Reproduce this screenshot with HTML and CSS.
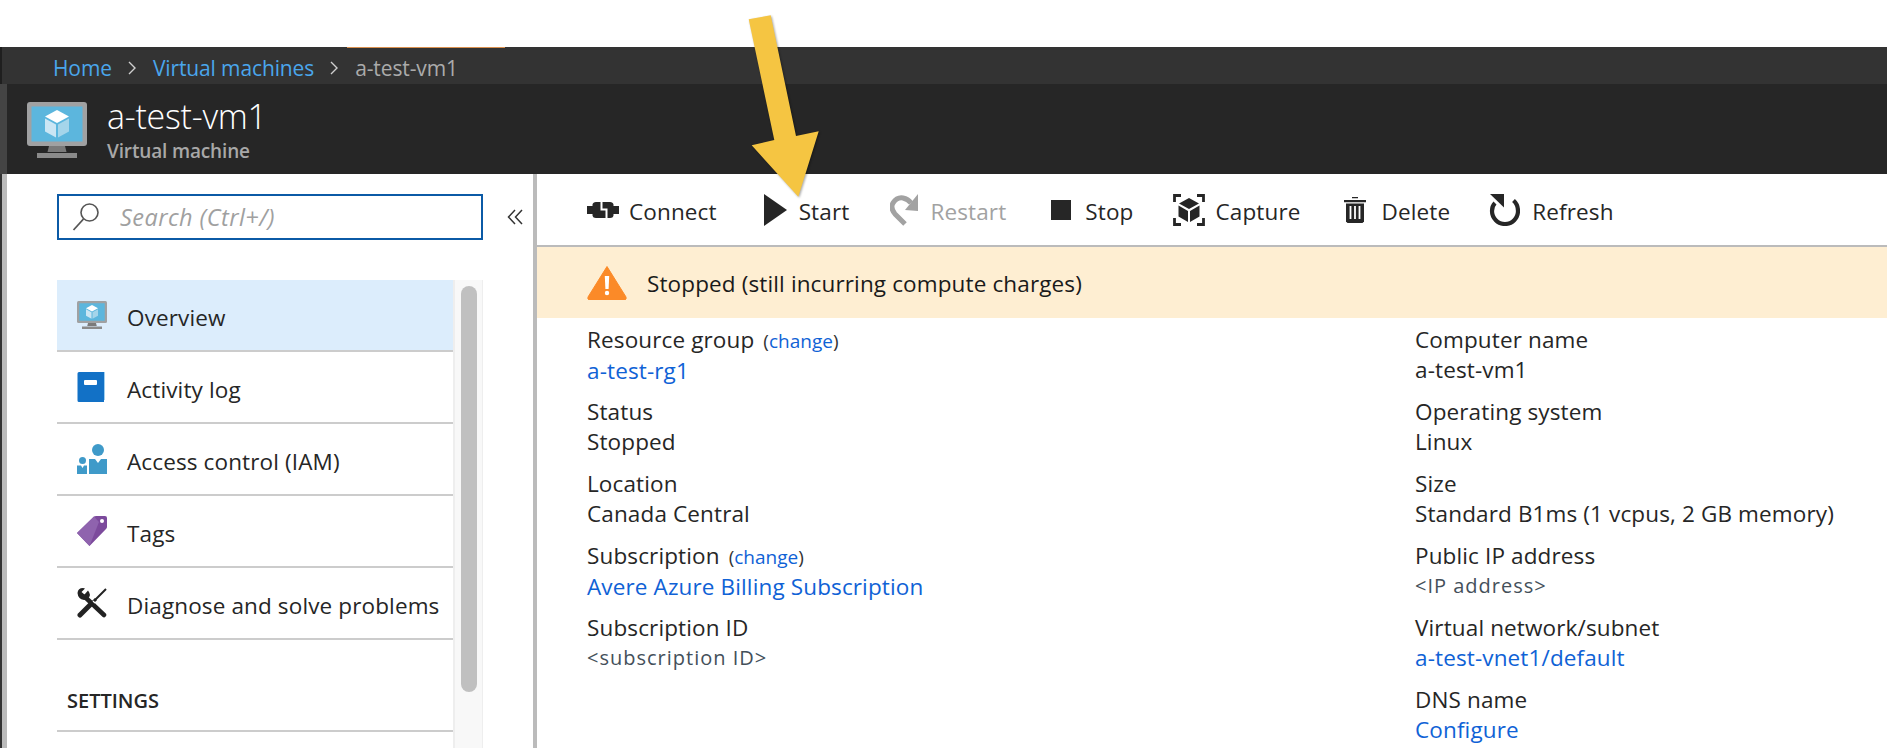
FILE: index.html
```html
<!DOCTYPE html>
<html lang="en">
<head>
<meta charset="utf-8">
<title>a-test-vm1 - Virtual machine</title>
<link rel="stylesheet" href="styles.css">
</head>
<body>
<div class="page">
  <div class="topgap"></div>
  <nav class="crumbs">
    <span class="crumb-accent"></span>
    <a class="crumb-link">Home</a>
    <svg class="crumb-sep" viewBox="0 0 10 16"><path d="M2 2l6 6-6 6" fill="none" stroke="#cfcfcf" stroke-width="1.4"/></svg>
    <a class="crumb-link">Virtual machines</a>
    <svg class="crumb-sep" viewBox="0 0 10 16"><path d="M2 2l6 6-6 6" fill="none" stroke="#cfcfcf" stroke-width="1.4"/></svg>
    <span class="crumb-current">a-test-vm1</span>
  </nav>
  <header class="title-bar">
    <svg class="vm-logo" viewBox="0 0 60 56">
      <rect x="0" y="0" width="60" height="44" rx="3" fill="#a0a1a2"/>
      <rect x="4.5" y="4.500" width="51" height="35" fill="#5cb6dd"/>
      <path d="M22 44h16l1.500 6h-19z" fill="#7a7a7a"/>
      <rect x="10" y="51" width="40" height="5" fill="#8a8a8a"/>
      <path d="M30 8l12 6.500-12 6.500-12-6.500z" fill="#fff"/>
      <path d="M18 16.500l11 6v13l-11-6z" fill="#cbe6f4"/>
      <path d="M42 16.500l-11 6v13l11-6z" fill="#a5d5ea"/>
    </svg>
    <div class="title-text">
      <h1 class="title">a-test-vm1</h1>
      <div class="subtitle">Virtual machine</div>
    </div>
  </header>
  <main class="body">
    <aside class="sidebar">
      <div class="search-row">
        <div class="search">
          <svg class="search-icon" viewBox="0 0 28 30"><circle cx="17.500" cy="10.500" r="8.500" fill="none" stroke="#555" stroke-width="1.600"/><path d="M11.500 17L1.500 28" fill="none" stroke="#555" stroke-width="1.800"/></svg>
          <span class="search-text">Search (Ctrl+/)</span>
        </div>
        <svg class="collapse" viewBox="0 0 16 16"><path d="M8 1L1.500 8 8 15M15 1L8.500 8 15 15" fill="none" stroke="#333" stroke-width="1.500"/></svg>
      </div>
      <div class="nav-wrap">
        <ul class="nav">
          <li class="nav-item is-active">
            <svg class="nav-icon" viewBox="0 0 60 56">
              <rect x="0" y="0" width="60" height="44" rx="3" fill="#a0a1a2"/>
              <rect x="4.500" y="4.500" width="51" height="35" fill="#5cb6dd"/>
              <path d="M22 44h16l1.500 6h-19z" fill="#7a7a7a"/>
              <rect x="10" y="51" width="40" height="5" fill="#8a8a8a"/>
              <path d="M30 8l12 6.500-12 6.500-12-6.500z" fill="#fff"/>
              <path d="M18 16.500l11 6v13l-11-6z" fill="#cbe6f4"/>
              <path d="M42 16.500l-11 6v13l11-6z" fill="#a5d5ea"/>
            </svg>
            <span class="nav-label">Overview</span>
          </li>
          <li class="nav-item">
            <svg class="nav-icon" viewBox="0 0 30 30">
              <path d="M4 0h24v28H3z" fill="#9fd0f0"/>
              <path d="M2 0h25v30H2a1.500 1.500 0 0 1-1.500-1.500V1.500A1.500 1.500 0 0 1 2 0z" fill="#1271c6"/>
              <rect x="7" y="8" width="13" height="5" rx="1" fill="#fff"/>
            </svg>
            <span class="nav-label">Activity log</span>
          </li>
          <li class="nav-item">
            <svg class="nav-icon" viewBox="0 0 30 30">
              <circle cx="21" cy="6" r="6" fill="#3f9ac9"/>
              <path d="M12 15h6l3 4 3-4h6v15H12z" fill="#3f9ac9"/>
              <circle cx="5.500" cy="16.500" r="3.500" fill="#3f9ac9"/>
              <path d="M0 21.500h4l1.500 2.500L7 21.500h3V30H0z" fill="#3f9ac9"/>
            </svg>
            <span class="nav-label">Access control (IAM)</span>
          </li>
          <li class="nav-item">
            <svg class="nav-icon" viewBox="0 0 30 30">
              <path d="M0 17L17 .500Q18 0 19 0h9q2 0 2 2v9q0 1-1 2L12.500 30z" fill="#7c4a9c"/>
              <path d="M0 17L17 .500 22 6 12.500 30z" fill="#8f63ae"/>
              <circle cx="25" cy="5" r="2" fill="#fff"/>
            </svg>
            <span class="nav-label">Tags</span>
          </li>
          <li class="nav-item">
            <svg class="nav-icon" viewBox="0 0 30 30">
              <path d="M8 9L27 27" fill="none" stroke="#222" stroke-width="4.500" stroke-linecap="round"/>
              <path d="M6 0Q1 0 .500 5 1 11 7 12q5-.5 6-5-.5-3-2-4.500L7.500 6.500 4.500 4 8 .500z" fill="#222"/>
              <path d="M29 1L18 12" fill="none" stroke="#222" stroke-width="2"/>
              <path d="M19 11l-4 4" fill="none" stroke="#222" stroke-width="3"/>
              <path d="M14 16L3 27" fill="none" stroke="#222" stroke-width="5" stroke-linecap="round"/>
              <path d="M16 13l2 2" fill="none" stroke="#fff" stroke-width="1.200"/>
            </svg>
            <span class="nav-label">Diagnose and solve problems</span>
          </li>
          <li class="nav-heading">SETTINGS</li>
          <li class="nav-item"></li>
        </ul>
        <div class="scroll-track"><div class="scroll-thumb"></div></div>
      </div>
    </aside>
    <section class="content">
      <div class="toolbar">
        <button class="tool">
          <svg class="ic-connect" viewBox="0 0 32 16">
            <path d="M0 4h5.500V2.500Q6 0 9 0h14q3 0 3.500 2.500V4H32v8h-5.500v1.500Q26 16 23 16H9q-3 0-3.500-2.500V12H0z" fill="#262626"/>
            <path d="M14.500 0V7.500H19.500V16" fill="none" stroke="#fff" stroke-width="2"/>
          </svg>
          <span class="tool-label">Connect</span>
        </button>
        <button class="tool">
          <svg class="ic-start" viewBox="0 0 23 32"><path d="M0 0l23 16L0 32z" fill="#262626"/></svg>
          <span class="tool-label">Start</span>
        </button>
        <button class="tool is-disabled">
          <svg class="ic-restart" viewBox="0 0 28 32">
            <path d="M15 30L5 20Q0 14 3 9 7 3 13 4 18 5 21 9" fill="none" stroke="#a2a2a2" stroke-width="5"/>
            <path d="M28 0v17L15 16z" fill="#a2a2a2"/>
          </svg>
          <span class="tool-label">Restart</span>
        </button>
        <button class="tool">
          <span class="ic-stop"></span>
          <span class="tool-label">Stop</span>
        </button>
        <button class="tool">
          <svg class="ic-capture" viewBox="0 0 32 32">
            <path d="M8 1.500H1.500V8M24 1.500h6.500V8M1.500 24v6.500H8M30.500 24v6.500H24" fill="none" stroke="#262626" stroke-width="2.800"/>
            <path d="M16 4l10 5.500L16 15 6 9.500z" fill="#262626"/>
            <path d="M5.500 11.500l9.500 5.500v11l-9.500-5.500zM26.500 11.500L17 17v11l9.500-5.500z" fill="#262626"/>
          </svg>
          <span class="tool-label">Capture</span>
        </button>
        <button class="tool">
          <svg class="ic-delete" viewBox="0 0 22 26">
            <path d="M8 0h6v1.200H8zM0 3h22v2.200H0z" fill="#262626"/>
            <path d="M2 6.500h18V24.500L18.500 26h-15L2 24.500z" fill="#262626"/>
            <path d="M6.500 9v13M11 9v13M15.500 9v13" stroke="#fff" stroke-width="1.800"/>
          </svg>
          <span class="tool-label">Delete</span>
        </button>
        <button class="tool">
          <svg class="ic-refresh" viewBox="0 0 31 32">
            <path d="M24.500 6.500Q29 10.500 29 17a13 13 0 0 1-26 0Q3 12 6 9" fill="none" stroke="#262626" stroke-width="4.200"/>
            <path d="M1 0h14v13.500z" fill="#262626"/>
          </svg>
          <span class="tool-label">Refresh</span>
        </button>
      </div>
      <div class="banner">
        <svg class="warn" viewBox="0 0 40 35">
          <path d="M20 1.500L39 32q.8 2.500-1.500 3h-35Q.2 34.500 1 32z" fill="#fb8a28" stroke="#fb8a28" stroke-linejoin="round"/>
          <path d="M17.800 11h4.400l-.6 13h-3.200z" fill="#fff"/>
          <circle cx="20" cy="28" r="2.200" fill="#fff"/>
        </svg>
        <span class="banner-text">Stopped (still incurring compute charges)</span>
      </div>
      <div class="details">
        <div class="col">
          <div class="field"><div class="label">Resource group <span class="change">(<a class="link">change</a>)</span></div><a class="link">a-test-rg1</a></div>
          <div class="field"><div class="label">Status</div><div>Stopped</div></div>
          <div class="field"><div class="label">Location</div><div>Canada Central</div></div>
          <div class="field"><div class="label">Subscription <span class="change">(<a class="link">change</a>)</span></div><a class="link">Avere Azure Billing Subscription</a></div>
          <div class="field"><div class="label">Subscription ID</div><div class="placeholder">&lt;subscription ID&gt;</div></div>
        </div>
        <div class="col">
          <div class="field"><div class="label">Computer name</div><div>a-test-vm1</div></div>
          <div class="field"><div class="label">Operating system</div><div>Linux</div></div>
          <div class="field"><div class="label">Size</div><div>Standard B1ms (1 vcpus, 2 GB memory)</div></div>
          <div class="field"><div class="label">Public IP address</div><div class="placeholder">&lt;IP address&gt;</div></div>
          <div class="field"><div class="label">Virtual network/subnet</div><a class="link">a-test-vnet1/default</a></div>
          <div class="field"><div class="label">DNS name</div><a class="link">Configure</a></div>
        </div>
      </div>
    </section>
  </main>
  <svg class="callout" viewBox="0 0 80 190" aria-hidden="true">
    <path d="M1.700 7.300L23.700 3.300 49 124 71.700 119.300 51.300 184.700 4.700 133.300 27.300 128z" fill="#f5c542"/>
  </svg>
</div>
</body>
</html>
```

FILE: styles.css
```css
* { box-sizing: border-box; }
html, body { margin: 0; padding: 0; background: #fff; }
body {
  font-family: "Open Sans", "Noto Sans", "Liberation Sans", sans-serif;
  font-size: 22.5px;
  letter-spacing: 0.13px;
  color: #262626;
}
.page { position: relative; width: 1887px; height: 748px; overflow: hidden; display: flex; flex-direction: column; }
.topgap { height: 47px; flex: none; }

.crumbs {
  position: relative;
  height: 37px;
  flex: none;
  display: flex;
  align-items: center;
  padding: 4px 0 0 51px;
  background: #333;
  border-left: 2px solid #1f1f1f;
  font-size: 21px;
  letter-spacing: -0.12px;
}
.crumb-accent { position: absolute; left: 345px; top: 0; width: 158px; height: 1px; background: #d98f4e; }
.crumb-link { color: #4aa6ec; }
.crumb-current { color: #ababab; }
.crumb-sep { width: 10px; height: 16px; margin: 0 16px 0 15px; }

.title-bar {
  height: 90px;
  flex: none;
  display: flex;
  align-items: flex-start;
  background: #262626;
  border-left: 7px solid #444;
  padding: 18px 0 0 20px;
}
.vm-logo { width: 60px; height: 56px; flex: none; }
.title-text { margin-left: 20px; margin-top: -8px; }
.title { margin: 0; font-size: 34px; font-weight: 300; line-height: 45px; color: #fff; letter-spacing: -0.25px; }
.subtitle { font-size: 19px; font-weight: 600; line-height: 24px; color: #a8a8a8; letter-spacing: -0.15px; }

.body { flex: 1; display: flex; min-height: 0; }

.sidebar {
  width: 537px;
  flex: none;
  border-left: 2px solid #333;
  border-right: 4px solid #bbb;
  padding-left: 55px;
  position: relative;
  box-shadow: inset 5px 0 0 #bbb;
}
.search-row { display: flex; align-items: center; height: 46px; margin-top: 20px; }
.search {
  width: 426px;
  height: 46px;
  flex: none;
  display: flex;
  align-items: center;
  border: 2px solid #0b5aa6;
  padding-left: 13px;
}
.search-icon { width: 28px; height: 30px; flex: none; }
.search-text { margin-left: 20px; font-size: 23.5px; letter-spacing: 0.45px; font-style: italic; color: #a0a0a0; }
.collapse { width: 16px; height: 16px; margin-left: 24px; flex: none; }

.nav-wrap { display: flex; margin-top: 40px; height: 400px; }
.nav { width: 396px; flex: none; margin: 0; padding: 0; list-style: none; }
.nav-item {
  height: 72px;
  display: flex;
  align-items: center;
  padding-left: 20px;
  border-bottom: 2px solid #ccc;
}
.nav-item.is-active { background: #dcedfc; }
.nav-icon { width: 30px; height: 30px; flex: none; margin-right: 20px; }
.nav-label { padding-top: 4px; }
.nav-heading {
  height: 92px;
  display: flex;
  align-items: flex-end;
  padding: 0 0 15px 10px;
  font-size: 20px;
  line-height: 28px;
  font-weight: 600;
  letter-spacing: 0;
  border-bottom: 2px solid #ccc;
}
.scroll-track {
  width: 30px;
  flex: none;
  height: 480px;
  background: #f8f8f8;
  border-left: 2px solid #eee;
  border-right: 1px solid #eee;
  padding: 6px 5px 0 6px;
}
.scroll-thumb { width: 16px; height: 406px; border-radius: 8px; background: #c0c0c0; }

.content { flex: 1; min-width: 0; }
.toolbar {
  height: 73px;
  display: flex;
  align-items: center;
  padding-left: 50px;
  border-bottom: 2px solid #bbb;
}
.tool {
  display: flex;
  align-items: center;
  padding: 0;
  border: 0;
  background: none;
  font: inherit;
  letter-spacing: inherit;
  color: inherit;
}
.tool.is-disabled { color: #a2a2a2; }
.tool svg { flex: none; }
.tool-label { padding-top: 3px; }
.ic-connect { width: 32px; height: 16px; margin-right: 10px; }
.ic-start { width: 23px; height: 32px; margin: 0 12px 0 47px; }
.ic-restart { width: 28px; height: 32px; margin: 0 12px 0 41px; }
.ic-stop { width: 20px; height: 20px; background: #262626; margin: 0 14px 0 45px; flex: none; }
.ic-capture { width: 32px; height: 32px; margin: 0 10px 0 40px; }
.ic-delete { width: 22px; height: 26px; margin: 0 15px 0 44px; }
.ic-refresh { width: 31px; height: 32px; margin: 0 12px 0 39px; }

.banner {
  height: 71px;
  display: flex;
  align-items: center;
  padding-left: 50px;
  background: #feeed2;
  color: #1a1a1a;
}
.banner-text { padding-top: 2px; }
.warn { width: 40px; height: 35px; margin-right: 20px; flex: none; }

.details { display: grid; grid-template-columns: 828px 1fr; padding: 7px 0 0 50px; line-height: 30px; }
.field { height: 72px; }
.label { color: #262626; }
.link { color: #0f62d6; }
.change { font-size: 19px; letter-spacing: 0; margin-left: 3px; color: #333; }
.placeholder { font-size: 20px; letter-spacing: 1px; color: #44505a; }

.callout { position: absolute; left: 747px; top: 12px; width: 80px; height: 190px; filter: drop-shadow(1px 1px 1px rgba(0,0,0,.35)); }
```
